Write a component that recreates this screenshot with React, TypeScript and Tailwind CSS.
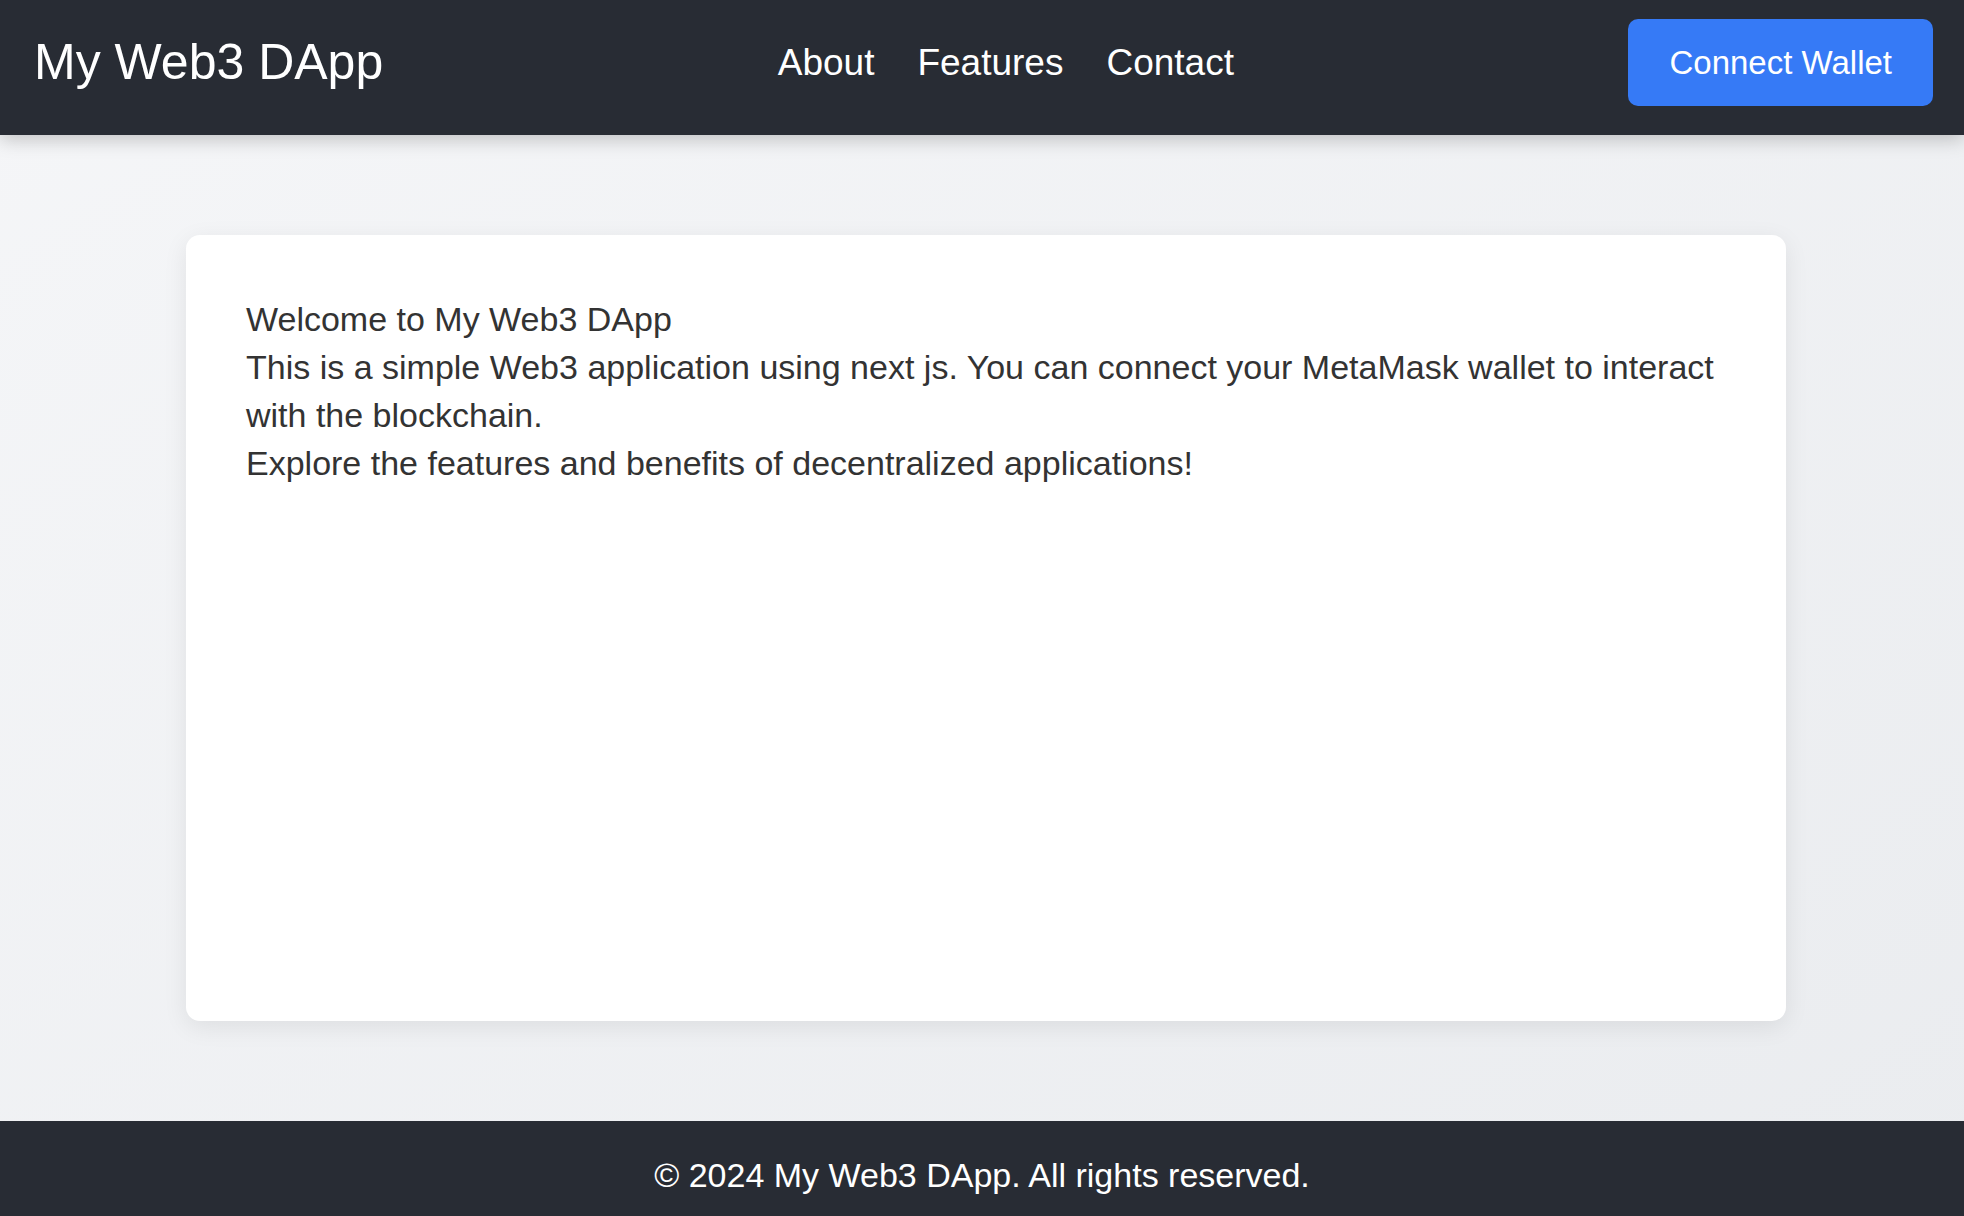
import React from "react"

const navItems = ["About", "Features", "Contact"]

export default function App() {
  return (
    <div
      className="flex h-screen flex-col overflow-hidden bg-linear-to-br from-[#f5f6f8] to-[#eaecef]"
      style={{ fontFamily: '"Liberation Sans", Arial, "Noto Sans CJK SC", sans-serif' }}
    >
      <header className="relative z-10 flex h-[135px] shrink-0 items-center justify-between bg-[#282c34] pb-[11px] pl-[34px] pr-[31px] shadow-[0_4px_18px_rgba(0,0,0,0.22)]">
        <h1 className="text-[50px] leading-none font-normal text-white">My Web3 DApp</h1>
        <nav className="flex items-center gap-[43px]">
          {navItems.map((item) => (
            <a key={item} href="#" className="text-[37px] leading-none text-white">
              {item}
            </a>
          ))}
        </nav>
        <button className="h-[87px] rounded-[10px] bg-[#367af6] px-[41px] text-[33px] leading-none text-white">
          Connect Wallet
        </button>
      </header>

      <main className="flex flex-1 justify-center pb-[100px] pl-[186px] pr-[178px] pt-[100px]">
        <div className="w-full max-w-[1600px] rounded-[14px] bg-white p-[60px] text-[34px] leading-[48px] text-[#333] shadow-[0_6px_24px_rgba(0,0,0,0.08)]">
          <p>Welcome to My Web3 DApp</p>
          <p>
            This is a simple Web3 application using next js. You can connect your MetaMask wallet to interact with the blockchain.
          </p>
          <p>Explore the features and benefits of decentralized applications!</p>
        </div>
      </main>

      <footer className="flex h-[95px] shrink-0 justify-center bg-[#282c34] pt-[34px]">
        <p className="text-[34px] leading-[40px] text-white">© 2024 My Web3 DApp. All rights reserved.</p>
      </footer>
    </div>
  )
}
